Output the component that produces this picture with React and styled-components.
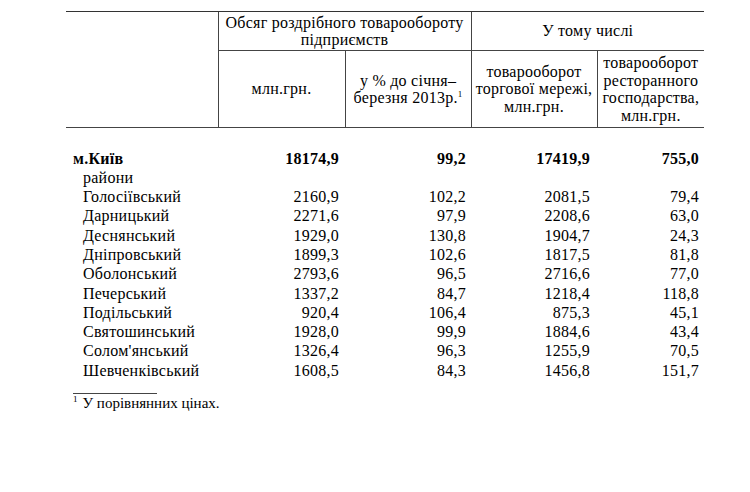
import React from 'react';
import styled, {createGlobalStyle} from 'styled-components';

const GlobalStyle = createGlobalStyle`
  html, body {
    margin: 0;
    padding: 0;
    background: #fff;
  }
`;

const serif = `"Liberation Serif", "Times New Roman", Times, "DejaVu Serif", serif`;

const Page = styled.div`
  width: 750px;
  height: 492px;
  padding: 11px 0 0 66px;
  box-sizing: border-box;
  font-family: ${serif};
  color: #000;
`;

const Table = styled.table`
  border-collapse: collapse;
  table-layout: fixed;
  width: 638px;
  font-family: ${serif};
  font-size: 16px;
  letter-spacing: 0.25px;
  color: #000;
`;

const HeadRow = styled.tr`
  height: ${p => p.h}px;
`;

const HeadCell = styled.th`
  font-weight: normal;
  text-align: center;
  vertical-align: middle;
  line-height: 17.5px;
  padding: 0 1px;
  border-top: ${p => (p.top ? '1px solid #333' : 'none')};
  border-bottom: ${p => (p.bottom ? '1px solid #444' : 'none')};
  border-left: ${p => (p.left ? '1px solid #444' : 'none')};
`;

const Sup = styled.sup`
  font-size: 9px;
  line-height: 0;
  vertical-align: 6px;
`;

const Spacer = styled.tr`
  height: 21px;
`;

const Row = styled.tr`
  height: 19.3px;
  font-weight: ${p => (p.bold ? 'bold' : 'normal')};
`;

const Name = styled.td`
  padding: 0 0 0 ${p => (p.indent ? 17 : 7)}px;
  line-height: 19.3px;
  white-space: nowrap;
`;

const Num = styled.td`
  text-align: right;
  padding: 0 ${p => p.pad}px 0 0;
  line-height: 19.3px;
`;

const Footnote = styled.div`
  margin: 13px 0 0 7px;
  font-size: 15px;
`;

const Rule = styled.div`
  width: 84px;
  border-top: 1px solid #444;
`;

const NoteText = styled.div`
  padding-top: 1px;
  line-height: 17px;
`;

const NoteSup = styled.sup`
  font-size: 9px;
  line-height: 0;
  vertical-align: 6px;
  margin-right: 5px;
`;

const pads = [6, 5, 7, 5];

const total = ['18174,9', '99,2', '17419,9', '755,0'];

const districts = [
  ['Голосіївський', '2160,9', '102,2', '2081,5', '79,4'],
  ['Дарницький', '2271,6', '97,9', '2208,6', '63,0'],
  ['Деснянський', '1929,0', '130,8', '1904,7', '24,3'],
  ['Дніпровський', '1899,3', '102,6', '1817,5', '81,8'],
  ['Оболонський', '2793,6', '96,5', '2716,6', '77,0'],
  ['Печерський', '1337,2', '84,7', '1218,4', '118,8'],
  ['Подільський', '920,4', '106,4', '875,3', '45,1'],
  ['Святошинський', '1928,0', '99,9', '1884,6', '43,4'],
  ["Солом'янський", '1326,4', '96,3', '1255,9', '70,5'],
  ['Шевченківський', '1608,5', '84,3', '1456,8', '151,7'],
];

function App() {
  return (
    <>
      <GlobalStyle />
      <Page>
        <Table>
          <colgroup>
            <col style={{width: 152}} />
            <col style={{width: 127}} />
            <col style={{width: 126}} />
            <col style={{width: 126}} />
            <col style={{width: 107}} />
          </colgroup>
          <thead>
            <HeadRow h={39}>
              <HeadCell top bottom rowSpan={2}></HeadCell>
              <HeadCell top bottom left colSpan={2}>
                Обсяг роздрібного товарообороту<br />підприємств
              </HeadCell>
              <HeadCell top bottom left colSpan={2}>У тому числі</HeadCell>
            </HeadRow>
            <HeadRow h={77}>
              <HeadCell bottom left>млн.грн.</HeadCell>
              <HeadCell bottom left>
                у % до січня–<br />березня 2013р.<Sup>1</Sup>
              </HeadCell>
              <HeadCell bottom left>
                товарооборот<br />торгової мережі,<br />млн.грн.
              </HeadCell>
              <HeadCell bottom left>
                товарооборот<br />ресторанного<br />господарства,<br />млн.грн.
              </HeadCell>
            </HeadRow>
          </thead>
          <tbody>
            <Spacer><td colSpan={5}></td></Spacer>
            <Row bold>
              <Name>м.Київ</Name>
              {total.map((v, i) => <Num key={i} pad={pads[i]}>{v}</Num>)}
            </Row>
            <Row>
              <Name indent>райони</Name>
              <td colSpan={4}></td>
            </Row>
            {districts.map(d => (
              <Row key={d[0]}>
                <Name indent>{d[0]}</Name>
                {d.slice(1).map((v, i) => <Num key={i} pad={pads[i]}>{v}</Num>)}
              </Row>
            ))}
          </tbody>
        </Table>
        <Footnote>
          <Rule />
          <NoteText><NoteSup>1</NoteSup>У порівнянних цінах.</NoteText>
        </Footnote>
      </Page>
    </>
  );
}

export default App;
